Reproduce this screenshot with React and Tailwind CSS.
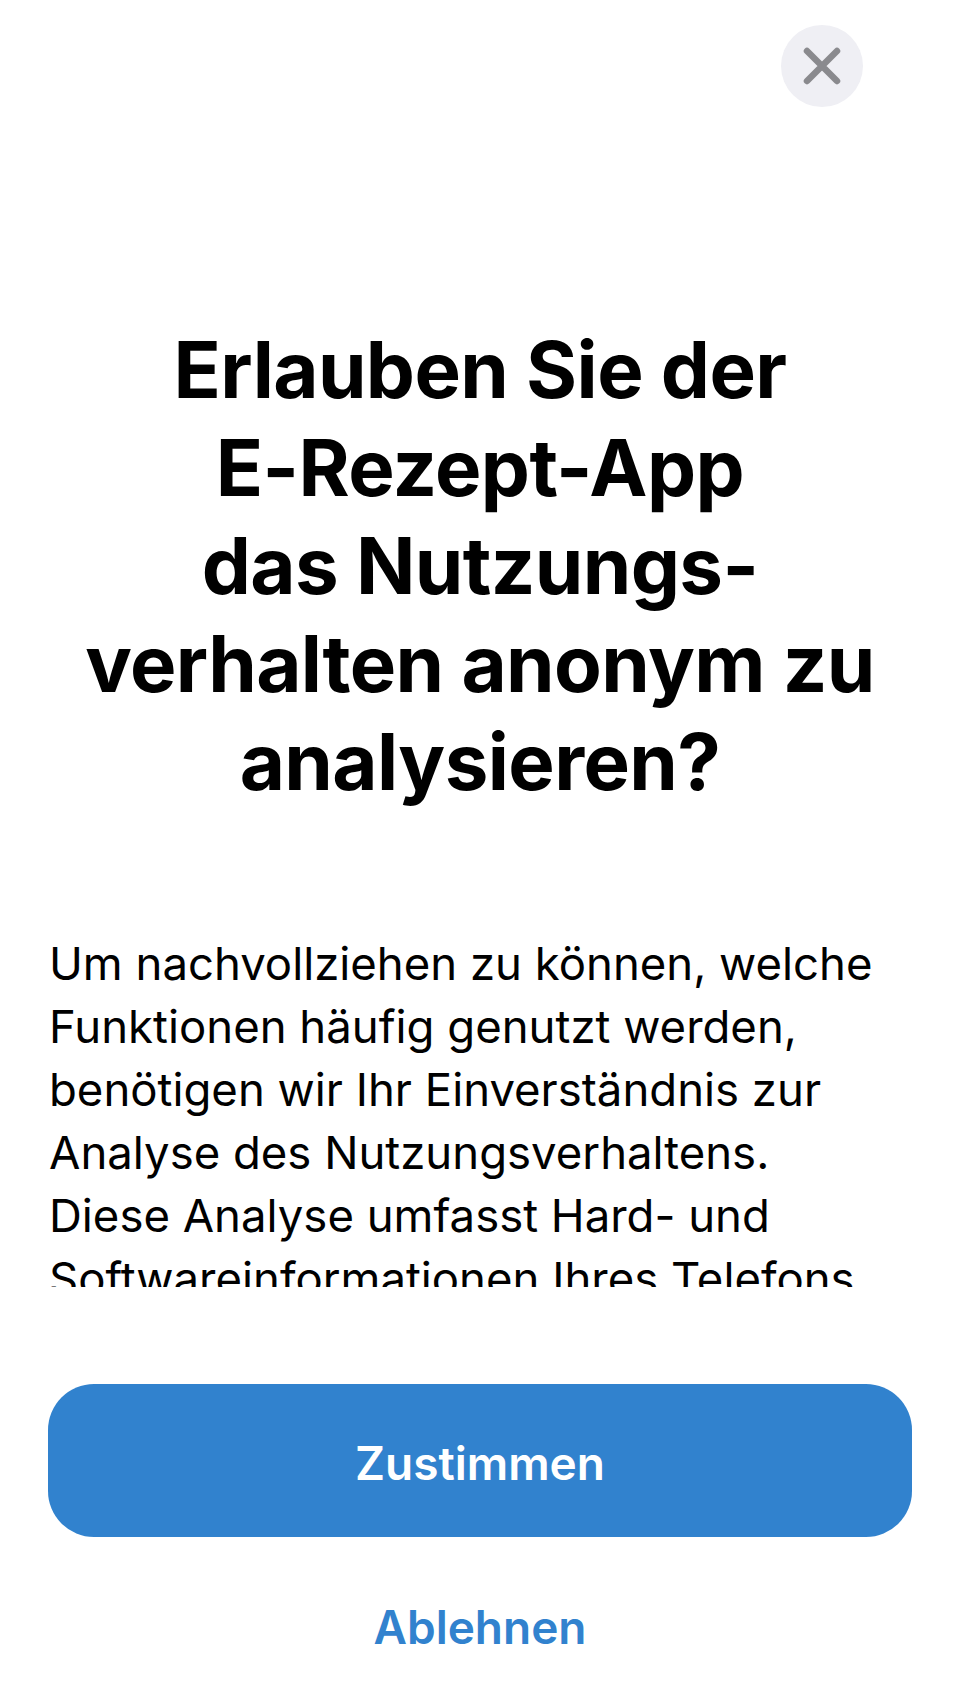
import React from 'react';

const CloseIcon = () => (
  <svg width="38" height="38" viewBox="0 0 38 38" fill="none">
    <path d="M4 4 L34 34 M34 4 L4 34" stroke="#8a8a8e" strokeWidth="6.5" strokeLinecap="round" />
  </svg>
);

const titleLines = ['Erlauben Sie der', 'E-Rezept-App', 'das Nutzungs-', 'verhalten anonym zu', 'analysieren?'];

const bodyLines = [
  'Um nachvollziehen zu können, welche',
  'Funktionen häufig genutzt werden,',
  'benötigen wir Ihr Einverständnis zur',
  'Analyse des Nutzungsverhaltens.',
  'Diese Analyse umfasst Hard- und',
  'Softwareinformationen Ihres Telefons',
  'sowie Informationen zur Nutzung der',
  'App. Die Daten werden anonymisiert.',
];

const App = () => {
  return (
    <div className="w-[960px] h-[1704px] bg-white flex flex-col text-black" style={{ fontFamily: 'Inter, "Noto Sans", sans-serif' }}>
      <div className="flex justify-end pt-[25px] pr-[97px]">
        <button className="w-[82px] h-[82px] rounded-full bg-[#efeff4] flex items-center justify-center">
          <CloseIcon />
        </button>
      </div>

      <div className="h-[1180px] overflow-hidden">
        <h1 className="pt-[214px] text-center text-[78px] leading-[98px] font-bold tracking-[-0.6px]">
          {titleLines.map((line) => (
            <span key={line} className="block">{line}</span>
          ))}
        </h1>
        <p className="mt-[121px] px-[49px] text-[45.5px] leading-[63px]">
          {bodyLines.map((line) => (
            <span key={line} className="block whitespace-nowrap">{line}</span>
          ))}
        </p>
      </div>

      <div className="flex flex-col items-stretch px-12 pt-[97px]">
        <button className="h-[153px] pt-[6px] rounded-[46px] bg-[#3182ce] text-white text-[46px] font-semibold">
          Zustimmen
        </button>
        <button className="mt-[62px] h-[56px] leading-[56px] text-[46px] font-semibold text-[#3182ce]">
          Ablehnen
        </button>
      </div>
    </div>
  );
};

export default App;
